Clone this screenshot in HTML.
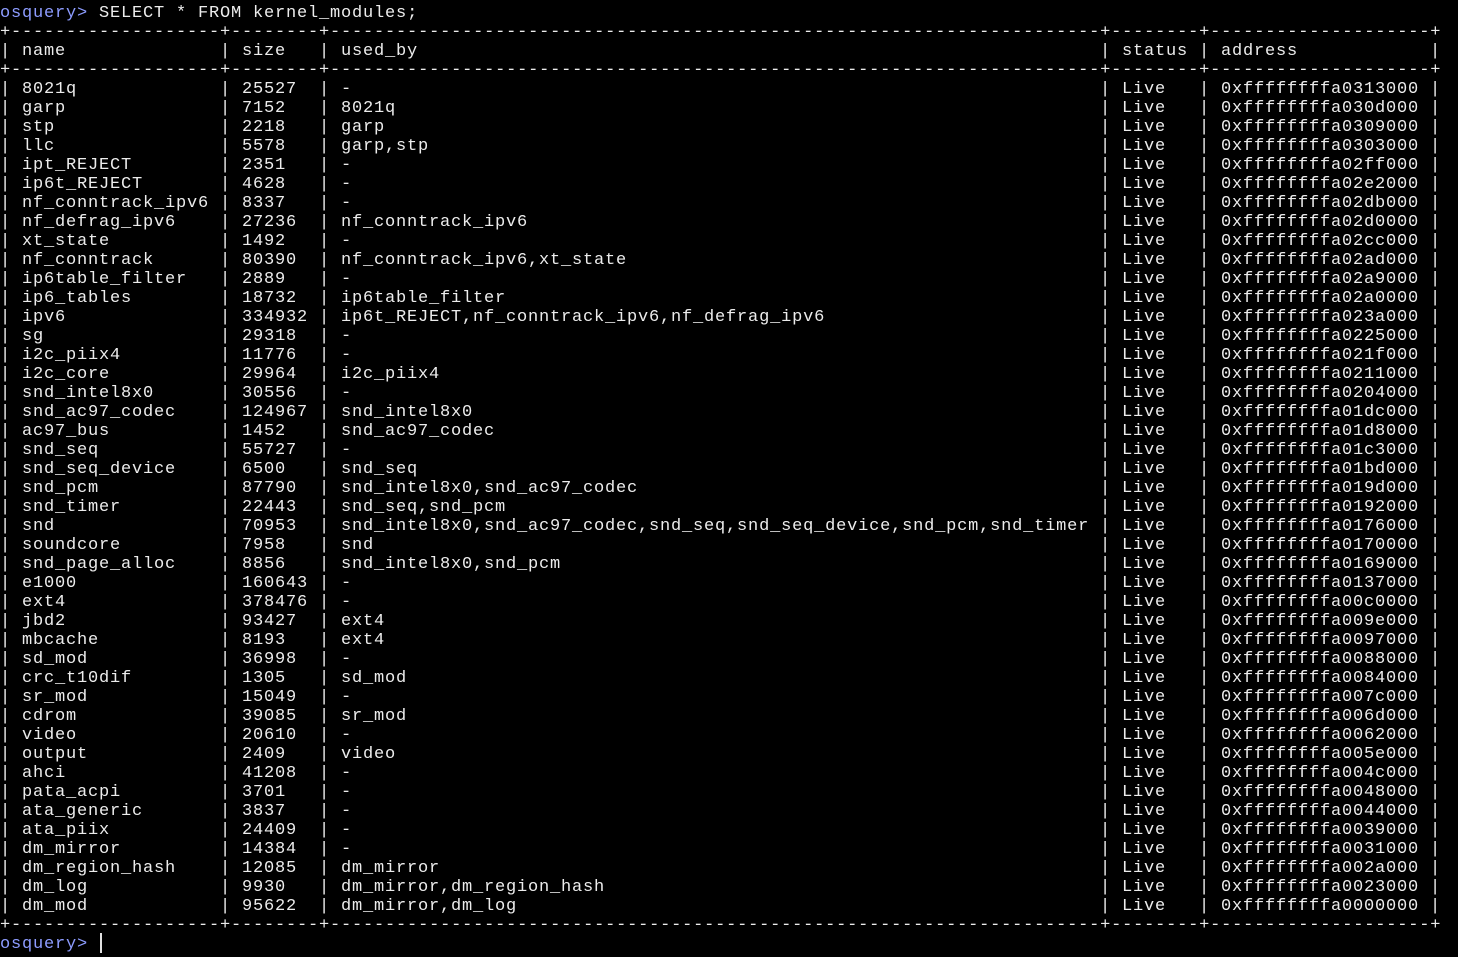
<!DOCTYPE html>
<html><head><meta charset="utf-8"><style>
html,body{margin:0;padding:0;background:#000;width:1458px;height:957px;overflow:hidden}
pre{position:absolute;margin:0;font-family:"Liberation Mono",monospace;font-size:17px;letter-spacing:0.8px;line-height:19px;color:#ececec;white-space:pre}
.p{color:#8d9cff}
.cur{position:absolute;left:100px;top:933px;width:2px;height:20px;background:#e0e0e0}
</style></head><body>
<pre style="left:0;top:4px"><span class="p">osquery&gt;</span> SELECT * FROM kernel_modules;
+-------------------+--------+----------------------------------------------------------------------+--------+--------------------+</pre>
<pre style="left:0;top:61px">+-------------------+--------+----------------------------------------------------------------------+--------+--------------------+</pre>
<pre style="left:0;top:916px">+-------------------+--------+----------------------------------------------------------------------+--------+--------------------+
<span class="p">osquery&gt;</span></pre>
<div class="cur"></div>
<pre style="left:0;top:42px">|

|
|
|
|
|
|
|
|
|
|
|
|
|
|
|
|
|
|
|
|
|
|
|
|
|
|
|
|
|
|
|
|
|
|
|
|
|
|
|
|
|
|
|
|</pre>
<pre style="left:220px;top:42px">|

|
|
|
|
|
|
|
|
|
|
|
|
|
|
|
|
|
|
|
|
|
|
|
|
|
|
|
|
|
|
|
|
|
|
|
|
|
|
|
|
|
|
|
|</pre>
<pre style="left:319px;top:42px">|

|
|
|
|
|
|
|
|
|
|
|
|
|
|
|
|
|
|
|
|
|
|
|
|
|
|
|
|
|
|
|
|
|
|
|
|
|
|
|
|
|
|
|
|</pre>
<pre style="left:1100px;top:42px">|

|
|
|
|
|
|
|
|
|
|
|
|
|
|
|
|
|
|
|
|
|
|
|
|
|
|
|
|
|
|
|
|
|
|
|
|
|
|
|
|
|
|
|
|</pre>
<pre style="left:1199px;top:42px">|

|
|
|
|
|
|
|
|
|
|
|
|
|
|
|
|
|
|
|
|
|
|
|
|
|
|
|
|
|
|
|
|
|
|
|
|
|
|
|
|
|
|
|
|</pre>
<pre style="left:1430px;top:42px">|

|
|
|
|
|
|
|
|
|
|
|
|
|
|
|
|
|
|
|
|
|
|
|
|
|
|
|
|
|
|
|
|
|
|
|
|
|
|
|
|
|
|
|
|</pre>
<pre style="left:22px;top:42px">name

8021q
garp
stp
llc
ipt_REJECT
ip6t_REJECT
nf_conntrack_ipv6
nf_defrag_ipv6
xt_state
nf_conntrack
ip6table_filter
ip6_tables
ipv6
sg
i2c_piix4
i2c_core
snd_intel8x0
snd_ac97_codec
ac97_bus
snd_seq
snd_seq_device
snd_pcm
snd_timer
snd
soundcore
snd_page_alloc
e1000
ext4
jbd2
mbcache
sd_mod
crc_t10dif
sr_mod
cdrom
video
output
ahci
pata_acpi
ata_generic
ata_piix
dm_mirror
dm_region_hash
dm_log
dm_mod</pre>
<pre style="left:242px;top:42px">size

25527
7152
2218
5578
2351
4628
8337
27236
1492
80390
2889
18732
334932
29318
11776
29964
30556
124967
1452
55727
6500
87790
22443
70953
7958
8856
160643
378476
93427
8193
36998
1305
15049
39085
20610
2409
41208
3701
3837
24409
14384
12085
9930
95622</pre>
<pre style="left:341px;top:42px">used_by

-
8021q
garp
garp,stp
-
-
-
nf_conntrack_ipv6
-
nf_conntrack_ipv6,xt_state
-
ip6table_filter
ip6t_REJECT,nf_conntrack_ipv6,nf_defrag_ipv6
-
-
i2c_piix4
-
snd_intel8x0
snd_ac97_codec
-
snd_seq
snd_intel8x0,snd_ac97_codec
snd_seq,snd_pcm
snd_intel8x0,snd_ac97_codec,snd_seq,snd_seq_device,snd_pcm,snd_timer
snd
snd_intel8x0,snd_pcm
-
-
ext4
ext4
-
sd_mod
-
sr_mod
-
video
-
-
-
-
-
dm_mirror
dm_mirror,dm_region_hash
dm_mirror,dm_log</pre>
<pre style="left:1122px;top:42px">status

Live
Live
Live
Live
Live
Live
Live
Live
Live
Live
Live
Live
Live
Live
Live
Live
Live
Live
Live
Live
Live
Live
Live
Live
Live
Live
Live
Live
Live
Live
Live
Live
Live
Live
Live
Live
Live
Live
Live
Live
Live
Live
Live
Live</pre>
<pre style="left:1221px;top:42px">address

0xffffffffa0313000
0xffffffffa030d000
0xffffffffa0309000
0xffffffffa0303000
0xffffffffa02ff000
0xffffffffa02e2000
0xffffffffa02db000
0xffffffffa02d0000
0xffffffffa02cc000
0xffffffffa02ad000
0xffffffffa02a9000
0xffffffffa02a0000
0xffffffffa023a000
0xffffffffa0225000
0xffffffffa021f000
0xffffffffa0211000
0xffffffffa0204000
0xffffffffa01dc000
0xffffffffa01d8000
0xffffffffa01c3000
0xffffffffa01bd000
0xffffffffa019d000
0xffffffffa0192000
0xffffffffa0176000
0xffffffffa0170000
0xffffffffa0169000
0xffffffffa0137000
0xffffffffa00c0000
0xffffffffa009e000
0xffffffffa0097000
0xffffffffa0088000
0xffffffffa0084000
0xffffffffa007c000
0xffffffffa006d000
0xffffffffa0062000
0xffffffffa005e000
0xffffffffa004c000
0xffffffffa0048000
0xffffffffa0044000
0xffffffffa0039000
0xffffffffa0031000
0xffffffffa002a000
0xffffffffa0023000
0xffffffffa0000000</pre>
</body></html>
